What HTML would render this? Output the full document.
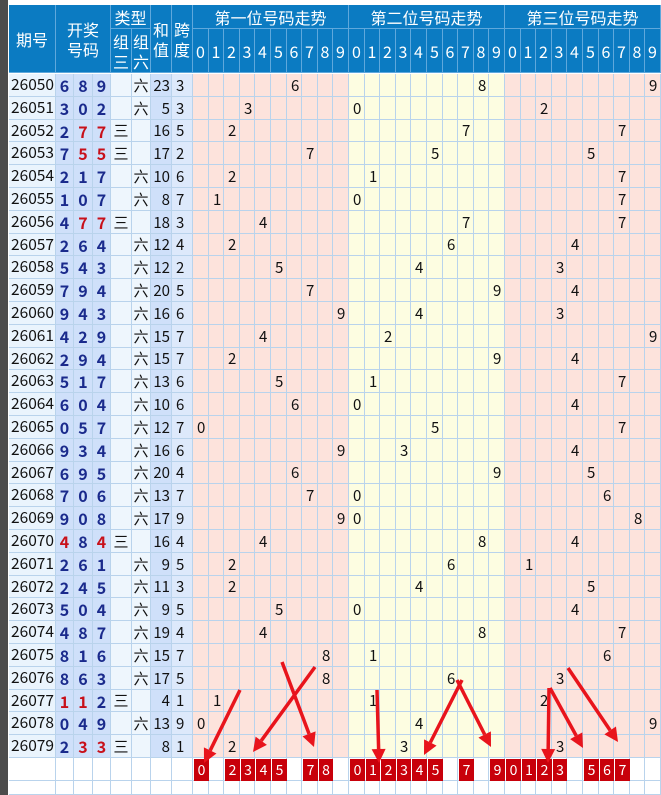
<!DOCTYPE html>
<html><head><meta charset="utf-8"><style>
body{margin:0;width:661px;height:795px;overflow:hidden;background:#fff;font-family:"Noto Sans CJK SC","Liberation Sans",sans-serif;position:relative}
.c{position:absolute;box-sizing:border-box;border-right:1px solid #b9d3ec;border-bottom:1px solid #b9d3ec;display:flex;align-items:center;justify-content:center;font-size:15px;color:#111;white-space:nowrap;line-height:1}
.h{background:#0b7bc2;color:#fff;border-color:#5fa8dc;font-size:16px;line-height:20px;text-align:center}
.b{font-weight:bold;color:#1a2a8c;font-size:16px}
.r{color:#c8101a}
.x{background:#c8000a;color:#fff;position:absolute;font-size:14px;display:flex;align-items:center;justify-content:center;height:22px}
</style></head><body>
<div style="position:absolute;left:0;top:0;width:8px;height:795px;background:#4c4c4c"></div>
<div id="t"></div>
<svg style="position:absolute;left:0;top:0" width="661" height="795" id="s"></svg>
<script>
var t=document.getElementById('t'),H='';
function c(x,y,w,h,txt,cls,st){H+='<div class="c '+(cls||'')+'" style="left:'+x+'px;top:'+y+'px;width:'+w+'px;height:'+h+'px;'+(st||'')+'">'+txt+'</div>';}
var cx=[9,56,74,93,111,132,151,172,193];
var W=468/30;
c(9,5,47,68,'期号','h');
c(56,5,55,68,'开奖<br>号码','h');
c(111,5,40,24,'类型','h');
c(111,29,21,44,'组<br>三','h');
c(132,29,19,44,'组<br>六','h');
c(151,5,21,68,'和<br>值','h');
c(172,5,21,68,'跨<br>度','h');
var tt=['第一位号码走势','第二位号码走势','第三位号码走势'];
for(var s=0;s<3;s++){var x0=193+s*10*W;c(Math.round(x0),5,Math.round(x0+10*W)-Math.round(x0),24,tt[s],'h');
for(var d=0;d<10;d++){var a=Math.round(x0+d*W),b=Math.round(x0+(d+1)*W);c(a,29,b-a,44,''+d,'h','font-size:16px');}}
var D=[['26050','689','六',23,3],['26051','302','六',5,3],['26052','277','三',16,5],['26053','755','三',17,2],['26054','217','六',10,6],['26055','107','六',8,7],['26056','477','三',18,3],['26057','264','六',12,4],['26058','543','六',12,2],['26059','794','六',20,5],['26060','943','六',16,6],['26061','429','六',15,7],['26062','294','六',15,7],['26063','517','六',13,6],['26064','604','六',10,6],['26065','057','六',12,7],['26066','934','六',16,6],['26067','695','六',20,4],['26068','706','六',13,7],['26069','908','六',17,9],['26070','484','三',16,4],['26071','261','六',9,5],['26072','245','六',11,3],['26073','504','六',9,5],['26074','487','六',19,4],['26075','816','六',15,7],['26076','863','六',17,5],['26077','112','三',4,1],['26078','049','六',13,9],['26079','233','三',8,1]];
var RH=22.8;
for(var i=0;i<32;i++){var y=Math.round(74+i*RH),y2=Math.round(74+(i+1)*RH),h=y2-y;var r=D[i];
 if(i>=30){y=i==30?758:781;h=i==30?23:14;}
 c(9,y,47,h,r?r[0]:'','',r?'background:#eaf4fd;justify-content:flex-end;padding-right:1px;font-size:15.5px':'');
 for(var k=0;k<3;k++){var dg=r?r[1][k]:'',red=false;if(r&&r[2]=='三'){var n=r[1];red=(n.split(dg).length-1)>=2;}
  c(cx[1+k],y,cx[2+k]-cx[1+k],h,dg,'b'+(red?' r':''),r?'background:#cfe0fa':'');}
 c(111,y,21,h,r&&r[2]=='三'?'三':'','',r?'background:#eef6fd':'');
 c(132,y,19,h,r&&r[2]=='六'?'六':'','',r?'background:#eef6fd':'');
 c(151,y,21,h,r?r[3]:'','',r?'background:#cfe0fa;justify-content:flex-end;padding-right:1px':'');
 c(172,y,21,h,r?r[4]:'','',r?'background:#dde9fb;justify-content:flex-start;padding-left:4px':'');
 for(var s=0;s<3;s++){var x0=193+s*10*W;for(var d=0;d<10;d++){var a=Math.round(x0+d*W),b=Math.round(x0+(d+1)*W);
  var bg=r?(s==1?'#fdfde1':'#fde3dc'):'#fff';var v=r&&(+r[1][s])==d?''+d:'';
  c(a,y,b-a,h,v,'','background:'+bg+';justify-content:flex-start;padding-left:4px;font-size:15px');}}
}
var boxes=[[0,2,3,4,5,7,8],[0,1,2,3,4,5,7,9],[0,1,2,3,5,6,7]];
for(var s=0;s<3;s++){var x0=193+s*10*W;boxes[s].forEach(function(d){var a=Math.round(x0+d*W),b=Math.round(x0+(d+1)*W);H+='<div class="x" style="left:'+(a+1)+'px;top:759px;width:'+(b-a-1)+'px">'+d+'</div>';});}
t.innerHTML=H;
var A=[[240,690,204,763],[315,667,253,752],[282,662,314,747],[377,690,379,763],[462,680,424,755],[457,680,491,747],[549,688,548,763],[550,688,583,748],[568,668,618,742]];
var S='';A.forEach(function(p){var dx=p[2]-p[0],dy=p[3]-p[1],L=Math.sqrt(dx*dx+dy*dy),ux=dx/L,uy=dy/L;var bx=p[2]-ux*14,by=p[3]-uy*14;
S+='<line x1="'+p[0]+'" y1="'+p[1]+'" x2="'+bx+'" y2="'+by+'" stroke="#e8141c" stroke-width="3.5"/>';
S+='<polygon fill="#e8141c" points="'+p[2]+','+p[3]+' '+(bx-uy*7)+','+(by+ux*7)+' '+(bx+uy*7)+','+(by-ux*7)+'"/>';});
document.getElementById('s').innerHTML=S;
</script>
</body></html>
